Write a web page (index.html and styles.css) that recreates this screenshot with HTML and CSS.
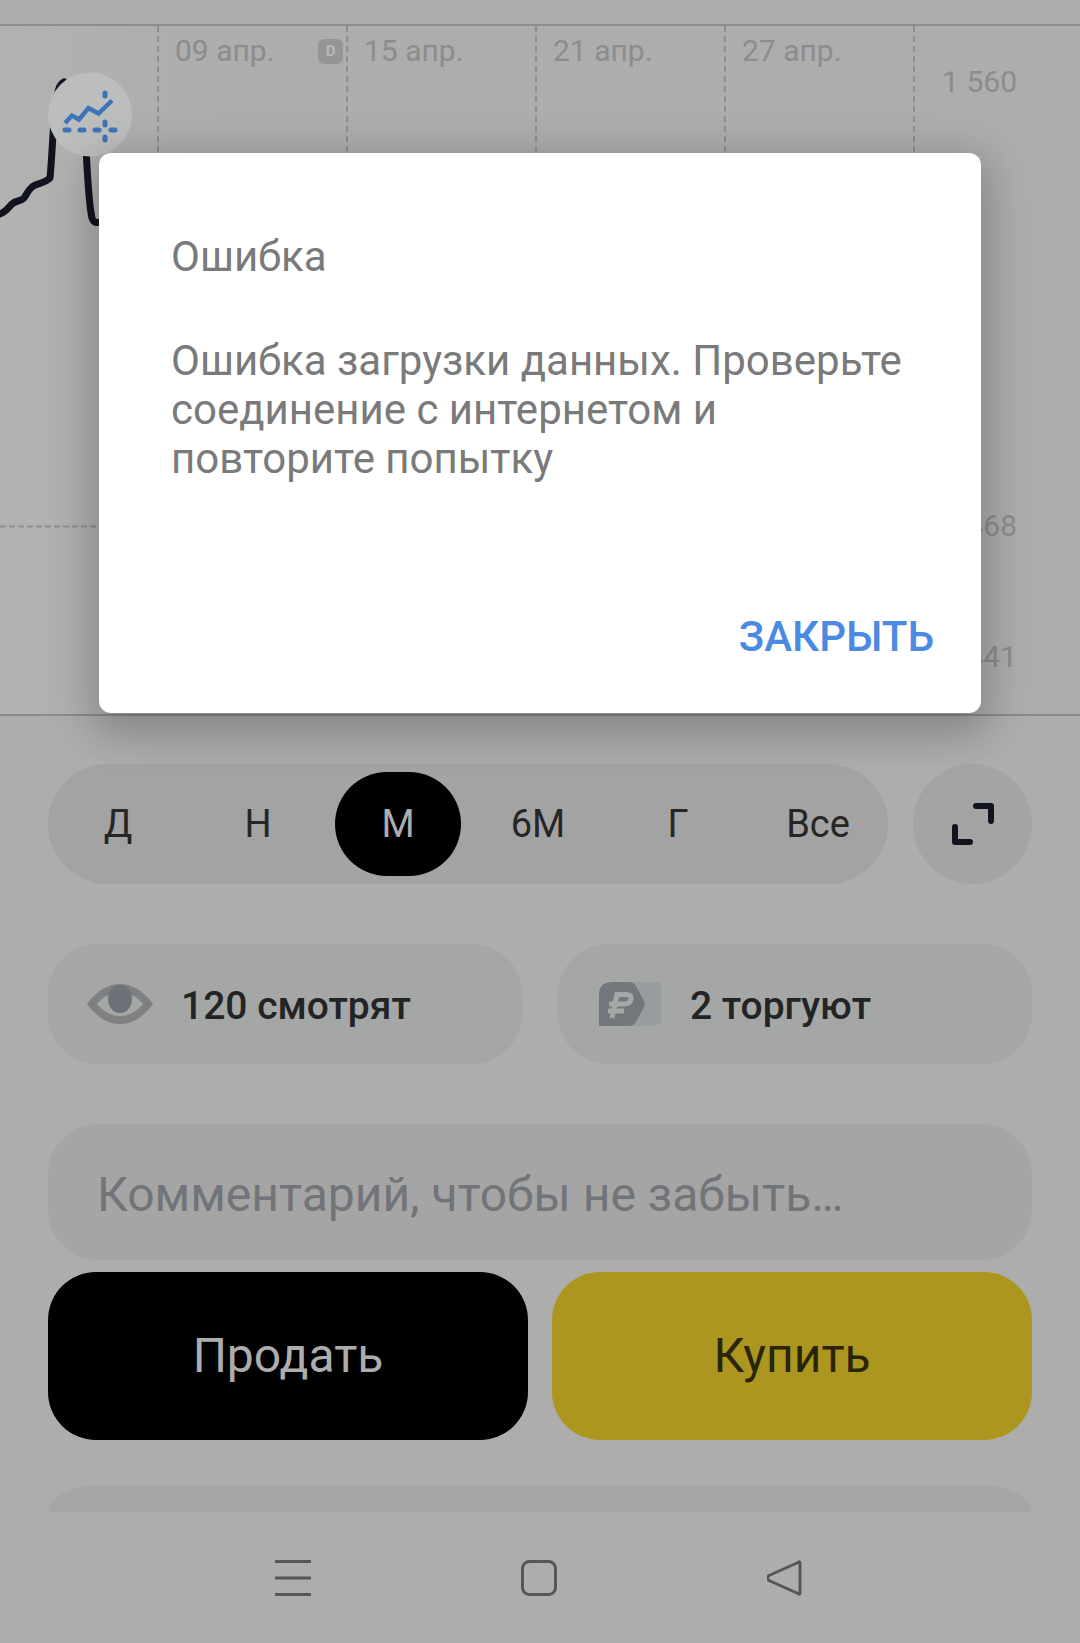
FILE: index.html
```html
<!DOCTYPE html>
<html lang="ru">
<head>
<meta charset="utf-8">
<title>Ошибка</title>
<link rel="stylesheet" href="styles.css">
</head>
<body>
<div class="page">
  <div class="topbar"></div>
  <section class="chart">
    <div class="cols">
      <div class="col col-first"></div>
      <div class="col"><span>09 апр.</span><b class="badge">D</b></div>
      <div class="col"><span>15 апр.</span></div>
      <div class="col"><span>21 апр.</span></div>
      <div class="col"><span>27 апр.</span></div>
      <div class="col col-last"></div>
    </div>
    <svg class="plot" viewBox="0 0 1080 689" width="1080" height="689">
      <line x1="0" y1="500.500" x2="914" y2="500.500" class="hline"/>
      <path class="price" d="M0 188 C6 186 8 182 12 178 C16 174 20 176 24 172 C27 168 28 164 32 161 C36 157 44 158 50 152 C53 120 53 90 57 70 C58 64 60 58 64 56 M85 100 C87 140 88 175 92 192 C94 198 98 197 102 195"/>
      <circle cx="90" cy="88.500" r="42" class="bubble"/>
      <path class="trend" d="M65 97 L72 89.500 L79 93.500 L88.500 82 L98.500 87.500 L112 74.500"/>
      <path class="trend-dots" d="M105 67 V70 M105 96 V99 M105 111 V114 M65 104 H69 M80 104 H84 M95 104 H99 M111 104 H115"/>
    </svg>
    <span class="price-label label-1">1 560</span>
    <span class="price-label label-2">1 468</span>
    <span class="price-label label-3">1 441</span>
  </section>

  <div class="range-row">
    <div class="range">
      <span class="range-item">Д</span>
      <span class="range-item">Н</span>
      <span class="range-item active">М</span>
      <span class="range-item">6М</span>
      <span class="range-item">Г</span>
      <span class="range-item">Все</span>
    </div>
    <div class="expand">
      <svg viewBox="0 0 42 42" width="42" height="42"><path d="M24 3 H39 V18 M3 24 V39 H18"/></svg>
    </div>
  </div>

  <div class="chips">
    <div class="chip">
      <svg class="eye" viewBox="0 0 66 40" width="66" height="40">
        <path class="eye-out" d="M0 20 C10 6 22 0 33 0 C44 0 56 6 66 20 C56 34 44 40 33 40 C22 40 10 34 0 20 Z"/>
        <path class="eye-in" d="M10 20 C18 11 26 8 33 8 C40 8 48 11 56 20 C48 29 40 32 33 32 C26 32 18 29 10 20 Z"/>
        <ellipse class="eye-pupil" cx="33" cy="15" rx="12" ry="14"/>
      </svg>
      <span class="chip-text">120 смотрят</span>
    </div>
    <div class="chip chip-right">
      <svg class="rub" viewBox="0 0 62 44" width="62" height="44">
        <path class="rub-back" d="M14 0 H62 V36 Q62 44 54 44 H0 V14 Z"/>
        <path class="rub-front" d="M14 0 H30 Q35 0 37 4 L45 19 Q46 22 45 25 L37 40 Q35 44 30 44 H0 V12 Q0 0 14 0 Z"/>
        <path class="rub-glyph" d="M13 36 L18 12.500 H27 Q33 12.500 32 17.500 Q31 22 25 22 H10 M9 29 H25"/>
      </svg>
      <span class="chip-text">2 торгуют</span>
    </div>
  </div>

  <div class="comment">Комментарий, чтобы не забыть…</div>

  <div class="actions">
    <div class="btn btn-sell">Продать</div>
    <div class="btn btn-buy">Купить</div>
  </div>

  <div class="next-card"></div>

  <nav class="navbar">
    <svg viewBox="0 0 36 36" width="36" height="36"><path class="nav-lines" d="M0 1.500 H36 M0 18 H36 M0 34.500 H36"/></svg>
    <svg viewBox="0 0 36 36" width="36" height="36"><rect class="nav-shape" x="1.500" y="1.500" width="33" height="33" rx="7"/></svg>
    <svg viewBox="0 0 36 36" width="36" height="36"><path class="nav-shape" d="M33 3 Q33 1 31 2.500 L2 15.500 Q-1 18 2 20.500 L31 33.500 Q33 35 33 33 Z"/></svg>
  </nav>
</div>

<div class="dialog">
  <h2 class="dialog-title">Ошибка</h2>
  <p class="dialog-text">Ошибка загрузки данных. Проверьте соединение с интернетом и повторите попытку</p>
  <div class="dialog-actions"><span class="dialog-close">ЗАКРЫТЬ</span></div>
</div>
</body>
</html>
```

FILE: styles.css
```css
* { box-sizing: border-box; }
html, body { margin: 0; padding: 0; }
body {
  width: 1080px;
  height: 1643px;
  overflow: hidden;
  background: #adadad;
  font-family: Roboto, "Liberation Sans", sans-serif;
  position: relative;
}
.page { display: flex; flex-direction: column; height: 1643px; }

.topbar { height: 24px; background: #adadad; border-bottom: 2px solid #8e8e8e; box-sizing: content-box; }

.chart {
  position: relative;
  height: 690px;
  flex: none;
  border-bottom: 2px solid #8a8a8a;
  background: linear-gradient(90deg, #b2b2b2, #adadad 20%);
}
.cols {
  display: grid;
  grid-template-columns: 157px repeat(4, 189px) 1fr;
  height: 100%;
}
.col {
  display: flex;
  justify-content: space-between;
  align-items: flex-start;
  padding: 6px 3px 0 18px;
  font-size: 30px;
  line-height: 38px;
  color: #8c8c8c;
  background: repeating-linear-gradient(180deg, #8f8f8f 0 6px, transparent 6px 10px) left top / 2px 100% no-repeat;
}
.col-first { background: none; }
.badge {
  width: 25px;
  height: 25px;
  margin-top: 7px;
  border-radius: 6px;
  background: #959595;
  color: #b9b9b9;
  font-size: 15px;
  line-height: 25px;
  font-weight: 700;
  text-align: center;
}
.plot { position: absolute; left: 0; top: 0; }
.hline { stroke: #8f8f8f; stroke-width: 2; stroke-dasharray: 6 3; }
.price { fill: none; stroke: #11141f; stroke-width: 7; stroke-linecap: round; stroke-linejoin: round; }
.bubble { fill: #bcbdbd; }
.trend { fill: none; stroke: #3f73b8; stroke-width: 4.500; stroke-linejoin: miter; }
.trend-dots { fill: none; stroke: #3f73b8; stroke-width: 5; stroke-linecap: round; }
.price-label {
  position: absolute;
  right: 63px;
  font-size: 30px;
  line-height: 36px;
  color: #8c8c8c;
}
.label-1 { top: 38px; }
.label-2 { top: 482px; }
.label-3 { top: 613px; }

.range-row {
  display: flex;
  gap: 25px;
  margin: 48px 48px 0;
  height: 120px;
  flex: none;
}
.range {
  flex: 1;
  display: flex;
  justify-content: space-between;
  align-items: center;
  padding: 0 7px;
  border-radius: 60px;
  background: #a3a3a3;
}
.range-item {
  width: 126px;
  height: 104px;
  border-radius: 52px;
  display: flex;
  align-items: center;
  justify-content: center;
  font-size: 38px;
  color: #262626;
}
.range-item.active { background: #000; color: #adadad; }
.expand {
  width: 119px;
  flex: none;
  border-radius: 50%;
  background: #a4a4a4;
  display: flex;
  align-items: center;
  justify-content: center;
}
.expand path { fill: none; stroke: #11141f; stroke-width: 6; stroke-linecap: round; stroke-linejoin: round; }

.chips {
  display: grid;
  grid-template-columns: 474px 474px;
  justify-content: space-between;
  margin: 60px 48px 0;
  flex: none;
}
.chip {
  height: 120px;
  border-radius: 50px;
  background: #a5a7a6;
  display: flex;
  align-items: center;
  gap: 28px;
  padding-left: 39px;
  font-size: 39px;
  font-weight: 500;
  color: #232425;
}
.chip-right { gap: 29px; padding-left: 41px; }
.chip-text { padding-top: 4px; }
.eye-out { fill: #7e8082; }
.eye-in { fill: #a5a7a6; }
.eye-pupil { fill: #6d7278; }
.rub-back { fill: #999c9f; }
.rub-front { fill: #73777c; }
.rub-glyph { fill: none; stroke: #a6a8a8; stroke-width: 5; }

.comment {
  margin: 60px 48px 0;
  height: 136px;
  flex: none;
  border-radius: 50px;
  background: #a5a5a5;
  display: flex;
  align-items: center;
  padding: 5px 0 0 49px;
  font-size: 48px;
  color: #717479;
}

.actions {
  display: grid;
  grid-template-columns: 480px 480px;
  justify-content: space-between;
  margin: 12px 48px 0;
  flex: none;
}
.btn {
  height: 168px;
  border-radius: 48px;
  display: flex;
  align-items: center;
  justify-content: center;
  padding-bottom: 2px;
  font-size: 48px;
}
.btn-sell { background: #000; color: #adadad; }
.btn-buy { background: #ad961f; color: #2a2508; }

.next-card {
  margin: 45px 48px 0;
  height: 27px;
  flex: none;
  background: #a5a7a6;
  border-radius: 50px 50px 0 0 / 27px 27px 0 0;
}

.navbar {
  flex: 1;
  display: grid;
  grid-template-columns: 36px 36px 36px;
  justify-content: center;
  column-gap: 210px;
  padding: 48px 0 0 0;
  margin-left: -2px;
}
.nav-lines { fill: none; stroke: #565656; stroke-width: 3; }
.nav-shape { fill: none; stroke: #565656; stroke-width: 3; stroke-linejoin: round; }

.dialog {
  position: absolute;
  left: 99px;
  top: 153px;
  width: 882px;
  height: 560px;
  display: flex;
  flex-direction: column;
  padding: 79px 47px 52px 72px;
  background: #fff;
  border-radius: 12px;
  box-shadow: 0 10px 46px 8px rgba(0,0,0,.16), 0 16px 38px 3px rgba(0,0,0,.1);
}
.dialog-title { margin: 0; font-size: 42px; line-height: 49px; font-weight: 400; color: #7a7a7a; }
.dialog-text { margin: 55px 0 0; max-width: 745px; font-size: 42px; line-height: 49px; color: #7a7a7a; }
.dialog-actions { margin-top: auto; display: flex; justify-content: flex-end; }
.dialog-close { font-size: 42px; line-height: 49px; font-weight: 500; color: #4a8ae2; }
```
